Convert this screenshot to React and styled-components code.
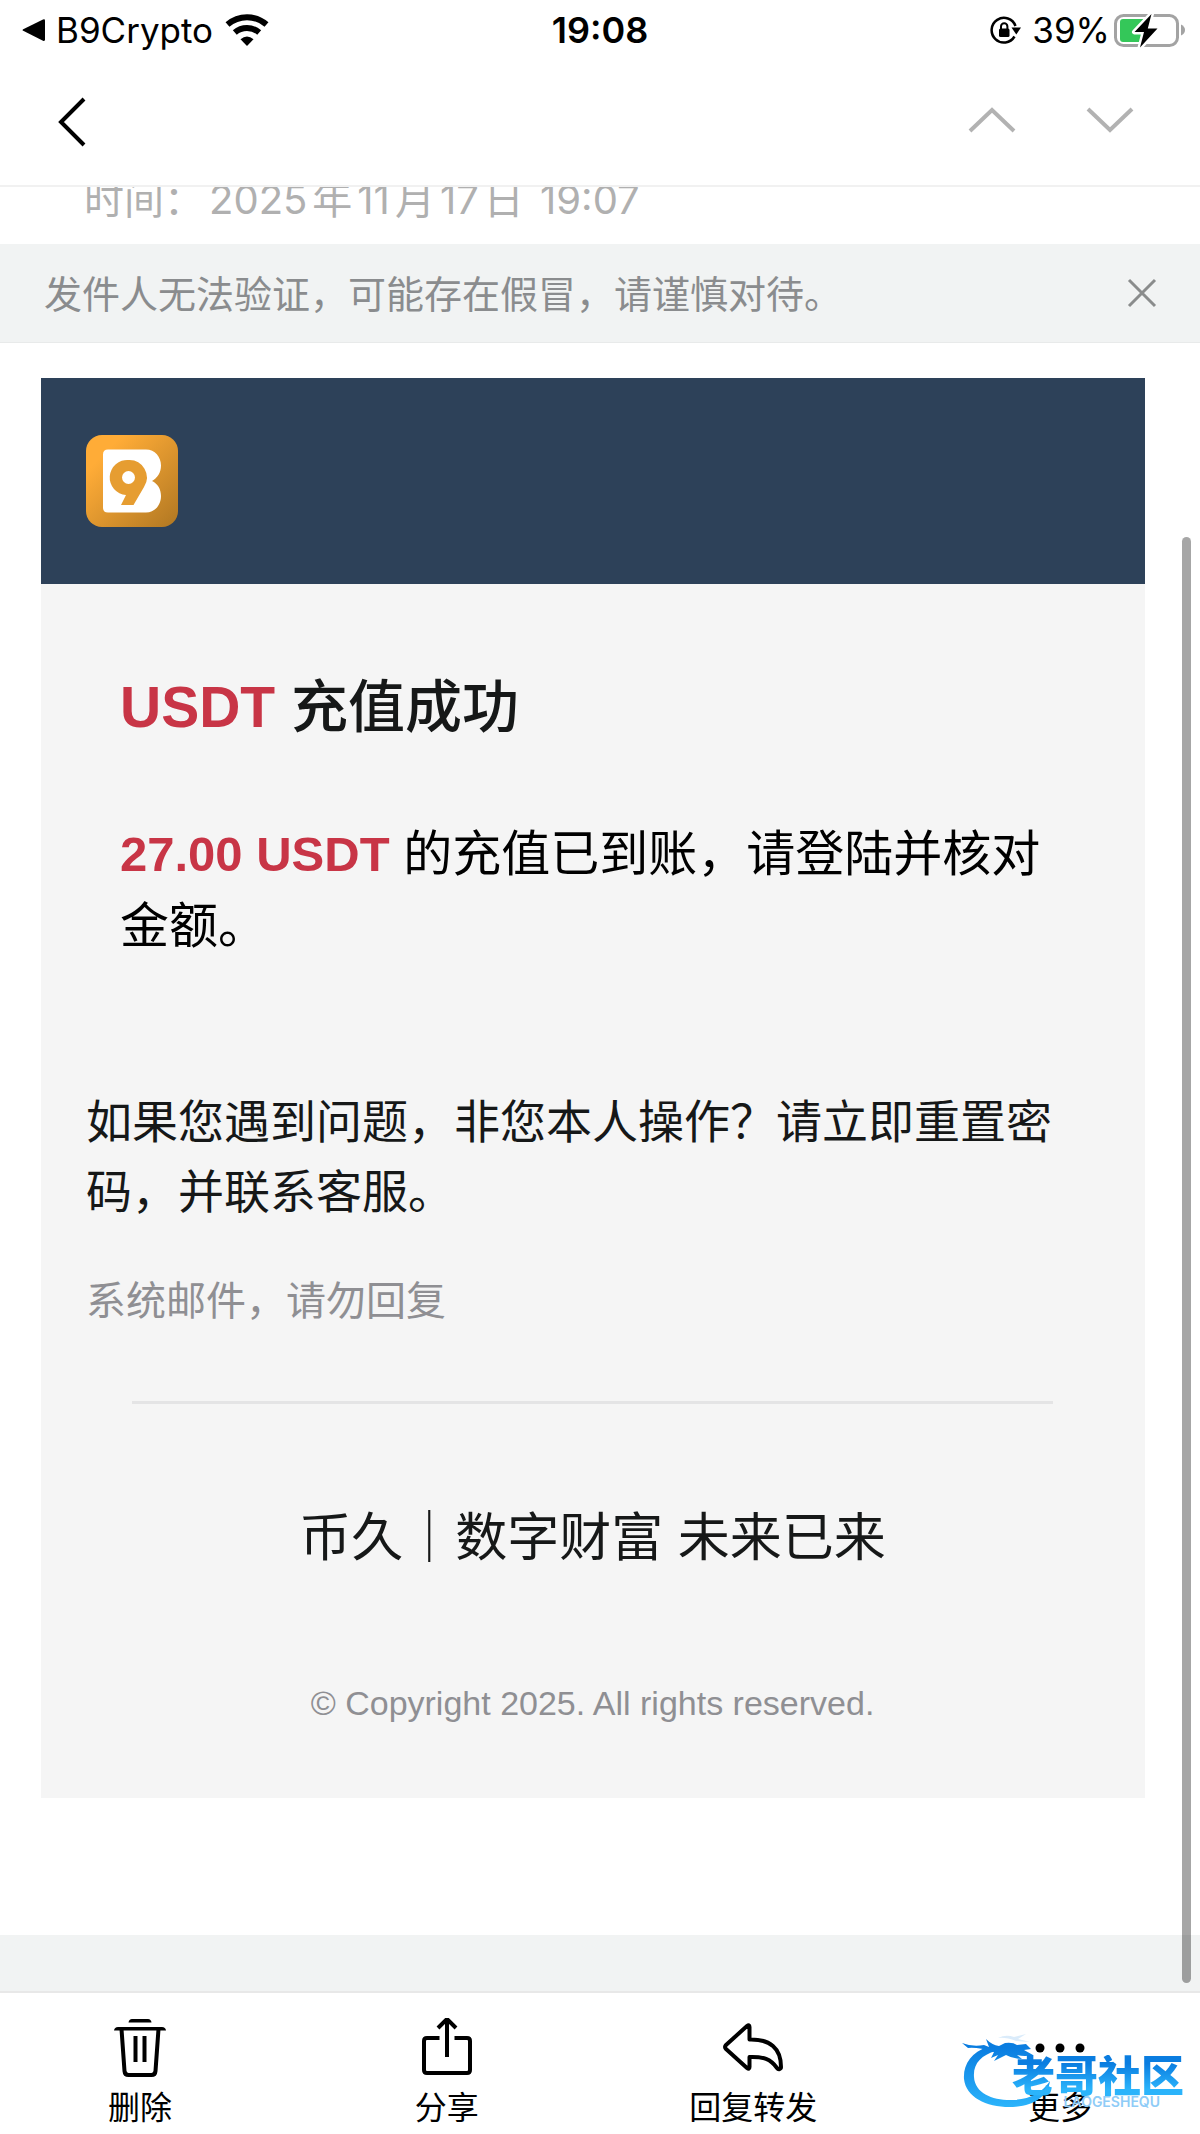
import React from "react";
import styled, { createGlobalStyle } from "styled-components";

const App = () => {
  return (
    <Page>
      <GlobalStyle />
      <StatusBar>
        <StatusGroup>
          <BackArrow viewBox="0 0 24 24" aria-hidden="true">
            <path d="M1.2 11.2 21 1.4Q23 .6 23 2.6v19q0 2-2 1.2L1.2 12.8Q-.2 12 1.2 11.2Z" />
          </BackArrow>
          <StatusText>B9Crypto</StatusText>
          <WifiIcon />
        </StatusGroup>
        <Clock>19:08</Clock>
        <StatusGroup $end>
          <LockIcon />
          <Battery>
            <StatusText>39%</StatusText>
            <BatteryIcon />
          </Battery>
        </StatusGroup>
      </StatusBar>

      <NavBar>
        <IconButton aria-label="返回">
          <svg width="28" height="50" viewBox="0 0 28 50">
            <path d="M26 2 3 25l23 23" stroke="#000" strokeWidth="4" />
          </svg>
        </IconButton>
        <NavGroup>
          <IconButton aria-label="上一封">
            <svg width="48" height="26" viewBox="0 0 48 26">
              <path d="M2 24 24 3l22 21" stroke="#b2b2b2" strokeWidth="4" />
            </svg>
          </IconButton>
          <IconButton aria-label="下一封">
            <svg width="48" height="26" viewBox="0 0 48 26">
              <path d="m2 2 22 21L46 2" stroke="#b2b2b2" strokeWidth="4" />
            </svg>
          </IconButton>
        </NavGroup>
      </NavBar>

      <Content>
        <SentTime>
          <span>时间：</span>
          <time>
            2025<DateUnit>年</DateUnit>11<DateUnit>月</DateUnit>17
            <DateUnit>日</DateUnit> 19:07
          </time>
        </SentTime>

        <Warning>
          <WarningText>发件人无法验证，可能存在假冒，请谨慎对待。</WarningText>
          <IconButton aria-label="关闭">
            <svg width="30" height="30" viewBox="0 0 30 30">
              <path d="m2 2 26 26M28 2 2 28" stroke="#8a8c8c" strokeWidth="3" />
            </svg>
          </IconButton>
        </Warning>

        <Mail>
          <MailHeader>
            <Logo />
          </MailHeader>
          <MailBody>
            <Notice>
              <Title>
                <Accent>USDT</Accent> 充值成功
              </Title>
              <Message>
                <Accent>27.00 USDT</Accent> 的充值已到账，请登陆并核对金额。
              </Message>
            </Notice>
            <Help>如果您遇到问题，非您本人操作？请立即重置密码，并联系客服。</Help>
            <NoReply>系统邮件，请勿回复</NoReply>
            <Divider />
            <Slogan>币久｜数字财富 未来已来</Slogan>
            <Copyright>© Copyright 2025. All rights reserved.</Copyright>
          </MailBody>
        </Mail>
        <Band />
        <ScrollThumb />
      </Content>

      <TabBar>
        <TabButton>
          <TrashIcon />
          删除
        </TabButton>
        <TabButton>
          <ShareIcon />
          分享
        </TabButton>
        <TabButton>
          <ReplyIcon />
          回复转发
        </TabButton>
        <TabButton>
          <MoreIcon />
          更多
        </TabButton>
        <Watermark />
      </TabBar>
    </Page>
  );
};

const WifiIcon = () => (
  <svg width="46" height="32" viewBox="-2 0 46 32" fill="none" stroke="#000">
    <path d="M2.5 10.5Q11 3.2 22 3.2T41.5 10.5" strokeWidth="6" />
    <path d="M9.8 18.5Q15 14 22 14t12.2 4.5" strokeWidth="6" />
    <path d="M15.5 25.2Q22 19.8 28.5 25.2L22 32Z" fill="#000" stroke="none" />
  </svg>
);

const LockIcon = () => (
  <svg width="32" height="28" viewBox="0 0 32 28" fill="none" stroke="#000">
    <path d="M24.5 20.5A12.3 12.3 0 1 1 25.5 10" strokeWidth="2.5" />
    <path d="M21.5 11.5H31l-4.700 7Z" fill="#000" stroke="none" />
    <rect x="9" y="12.5" width="10.5" height="8.5" rx="1.5" fill="#000" stroke="none" />
    <path d="M11 13v-2.500a3.200 3.200 0 0 1 6.400 0V13" strokeWidth="2" />
  </svg>
);

const BatteryIcon = () => (
  <svg width="72" height="36" viewBox="0 0 72 36">
    <rect x="1.5" y="3.5" width="62" height="30" rx="8" fill="none" stroke="#a3a3a3" strokeWidth="3" />
    <path d="M67 12.5q4 2 4 5.5t-4 5.5Z" fill="#a3a3a3" />
    <path d="M9 7h20v23H9q-3 0-3-3V10q0-3 3-3Z" fill="#34c759" />
    <path
      d="M37.5 2 20.5 20h9.500l-4 15.500L43.500 16.500h-9.700Z"
      fill="#000"
      stroke="#fff"
      strokeWidth="5"
      paintOrder="stroke"
      strokeLinejoin="round"
    />
  </svg>
);

const Logo = () => (
  <svg width="92" height="92" viewBox="0 0 92 92" role="img" aria-label="B9">
    <defs>
      <linearGradient id="gold" x1="0" y1="0" x2="1" y2="1">
        <stop offset="0.2" stopColor="#ffac37" />
        <stop offset="1" stopColor="#b07722" />
      </linearGradient>
    </defs>
    <rect width="92" height="92" rx="16" fill="url(#gold)" />
    <path
      d="M22 14.5h38c9 0 15 7.500 15 16 0 7-3.500 12.500-9 15.500 5.500 2.500 9 8 9 15 0 9-6 16.500-15 16.500H22q-5 0-5-5v-53q0-5 5-5Z"
      fill="#fff"
    />
    <path
      d="M42.5 25A17.5 17.5 0 0 0 40 60l-5 10h12.500L58 52A17.5 17.5 0 0 0 42.5 25Z"
      fill="#e69d31"
    />
    <circle cx="42.5" cy="42.5" r="6.500" fill="#fff" />
  </svg>
);

const TrashIcon = () => (
  <svg width="60" height="60" viewBox="0 0 60 60" fill="none" stroke="#000" strokeWidth="4">
    <path d="M18.5 4.5Q19 1 22 1h16q3 0 3.500 3.500Z" fill="#000" stroke="none" />
    <path d="M4 12.5Q4.500 9 8 9h44q3.500 0 4 3.500Z" fill="#000" stroke="none" />
    <path d="m11.500 11 3 42q.3 4 4 4h23q3.700 0 4-4l3-42" />
    <path d="M25.500 18v26M34.500 18v26" />
  </svg>
);

const ShareIcon = () => (
  <svg width="60" height="60" viewBox="0 0 60 60" fill="none" stroke="#000" strokeWidth="4">
    <path d="M22.500 20H10q-3 0-3 3v29q0 3 3 3h40q3 0 3-3V23q0-3-3-3H37.500" />
    <path d="M30 39V2M21 10l9-9 9 9" />
  </svg>
);

const ReplyIcon = () => (
  <svg width="62" height="60" viewBox="0 0 62 60" fill="none" stroke="#000" strokeWidth="4">
    <path
      d="M27.5 21.5V9q0-3-2.500-1L4 27q-2 2 0 4l21 19q2.500 2 2.500-1V39c14-.5 21 2 27.500 11 1.500 2 4 1 4-1C59 30 48 21 27.500 21.500Z"
      strokeLinejoin="round"
    />
  </svg>
);

const MoreIcon = () => (
  <svg width="60" height="60" viewBox="0 0 60 60">
    <circle cx="10" cy="30" r="4.500" />
    <circle cx="30" cy="30" r="4.500" />
    <circle cx="50" cy="30" r="4.500" />
  </svg>
);

const Watermark = () => (
  <WatermarkBox aria-hidden="true">
    <DragonMark viewBox="0 0 92 76">
      <defs>
        <linearGradient id="sea" gradientUnits="userSpaceOnUse" x1="0" y1="8" x2="0" y2="74">
          <stop offset="0.1" stopColor="#0a7de0" />
          <stop offset="1" stopColor="#2bb4fb" />
        </linearGradient>
      </defs>
      <g fill="url(#sea)">
        <path d="M26 14C9 19 1 32 2 46c2 19 24 29 49 28 21-1 35-11 37-26-8 12-20 18-36 19-20 1-39-6-40-23-1-13 7-22 22-26Z" />
        <path d="M0 10q10 4 22 2l5 2-3-8q6 6 13 7l6-3q8-1 12 2l9-1 5 5-7 1 9 5q-8 2-16 0l5 4q-9 0-16-4l-12 6 4-6-7 3 3-6Q16 14 6 15Z" />
        <path d="M36 5q8-4 16-1l12-3-8 5 12 3-14-1Q44 4 36 5Z" opacity="0.15" />
      </g>
    </DragonMark>
    <WatermarkName>老哥社区</WatermarkName>
    <WatermarkPinyin>LAOGESHEQU</WatermarkPinyin>
  </WatermarkBox>
);

const GlobalStyle = createGlobalStyle`
  * {
    box-sizing: border-box;
  }

  body {
    margin: 0;
    background: #fff;
    color: #000;
    font-family: Inter, "Noto Sans CJK SC", sans-serif;
  }

  svg {
    display: block;
    flex-shrink: 0;
  }
`;

const Page = styled.div`
  display: flex;
  flex-direction: column;
  min-height: 100vh;
`;

const StatusBar = styled.header`
  display: grid;
  grid-template-columns: 1fr auto 1fr;
  align-items: center;
  height: 60px;
`;

const StatusGroup = styled.div`
  display: flex;
  align-items: center;
  justify-content: ${(props) => (props.$end ? "flex-end" : "flex-start")};
  gap: 10px;
  padding: 0 14px 0 22px;
`;

const Battery = styled.div`
  display: flex;
  align-items: center;
  gap: 4px;
`;

const StatusText = styled.span`
  font-size: 35px;
  line-height: 60px;
`;

const Clock = styled.time`
  font-size: 36px;
  font-weight: 600;
  line-height: 60px;
`;

const BackArrow = styled.svg`
  width: 24px;
  height: 24px;
`;

const NavBar = styled.nav`
  display: flex;
  align-items: center;
  justify-content: space-between;
  height: 127px;
  padding: 0 66px 2px 58px;
  border-bottom: 2px solid #f1f1f1;
`;

const NavGroup = styled.div`
  display: flex;
  gap: 70px;
  padding-bottom: 4px;
`;

const IconButton = styled.button`
  padding: 0;
  border: 0;
  background: none;
  cursor: pointer;

  path {
    fill: none;
  }
`;

const Content = styled.main`
  position: relative;
  display: flex;
  flex: 1;
  flex-direction: column;
`;

/* scrolled partly under the nav bar */
const SentTime = styled.div`
  display: flex;
  align-items: flex-end;
  gap: 5px;
  height: 57px;
  padding: 0 84px 14px;
  overflow: hidden;
  color: #b0b0b0;
  font-size: 40px;
  line-height: 60px;
`;

const DateUnit = styled.span`
  margin: 0 5px;
`;

const Warning = styled.div`
  display: flex;
  align-items: center;
  justify-content: space-between;
  height: 99px;
  padding: 0 43px 0 44px;
  border-bottom: 1px solid #e8eaea;
  background: #f1f3f3;
`;

const WarningText = styled.span`
  padding-bottom: 4px;
  color: #8a8c8e;
  font-size: 38px;
`;

const Mail = styled.article`
  margin: 35px 55px 133px 41px;
  background: #f5f5f5;
  font-family: "Liberation Sans", "Noto Sans CJK SC", sans-serif;
`;

const MailHeader = styled.div`
  padding: 57px 46px 57px 45px;
  background: #2d4159;
`;

const MailBody = styled.div`
  padding: 80px 46px 70px 45px;
`;

const Notice = styled.section`
  padding: 0 34px;
`;

const Title = styled.h1`
  margin: 0;
  color: #161818;
  font-size: 57px;
  font-weight: 500;
  line-height: 86px;
`;

const Accent = styled.strong`
  color: #c83546;
  font-weight: 700;
`;

const Message = styled.p`
  margin: 68px 0 0;
  font-size: 49px;
  line-height: 72px;
`;

const Help = styled.p`
  margin: 125px 0 0;
  color: #161818;
  font-size: 46px;
  line-height: 70px;
`;

const NoReply = styled.p`
  margin: 44px 0 0;
  color: #8f8f93;
  font-size: 40px;
  line-height: 60px;
`;

const Divider = styled.hr`
  margin: 70px 46px 0;
  border: 0;
  border-top: 3px solid #e4e4e5;
`;

const Slogan = styled.p`
  margin: 96px 0 0;
  color: #161818;
  font-size: 52px;
  line-height: 76px;
  text-align: center;
`;

const Copyright = styled.p`
  margin: 102px 0 0;
  color: #8f8f93;
  font-size: 34px;
  line-height: 50px;
  text-align: center;
`;

const Band = styled.div`
  height: 56px;
  margin-top: auto;
  background: #f1f3f3;
`;

const ScrollThumb = styled.div`
  position: absolute;
  top: 350px;
  right: 9px;
  bottom: 8px;
  width: 9px;
  border-radius: 5px;
  background: rgba(0, 0, 0, 0.35);
`;

const TabBar = styled.footer`
  position: relative;
  display: flex;
  justify-content: space-between;
  height: 143px;
  padding: 0 75px;
  border-top: 2px solid #e8e8e8;
`;

const TabButton = styled.button`
  display: flex;
  flex-direction: column;
  align-items: center;
  width: 130px;
  padding: 25px 0 0;
  border: 0;
  background: none;
  color: #000;
  font-family: "Noto Sans CJK SC", sans-serif;
  font-size: 32px;
  line-height: 54px;
  white-space: nowrap;
  cursor: pointer;
`;

const WatermarkBox = styled.div`
  position: absolute;
  top: 40px;
  right: 16px;
  width: 222px;
  height: 76px;
`;

const DragonMark = styled.svg`
  position: absolute;
  top: 0;
  left: 0;
  width: 92px;
  height: 76px;
`;

const WatermarkName = styled.span`
  position: absolute;
  top: 22px;
  right: 0;
  background: linear-gradient(#0a7de0 20%, #2bb4fb 80%);
  background-clip: text;
  color: transparent;
  font-size: 43px;
  font-weight: 900;
  line-height: 43px;
`;

const WatermarkPinyin = styled.span`
  position: absolute;
  right: 24px;
  bottom: 0;
  color: #8fccf7;
  font-size: 14px;
  font-weight: 600;
  line-height: 14px;
`;

export default App;
